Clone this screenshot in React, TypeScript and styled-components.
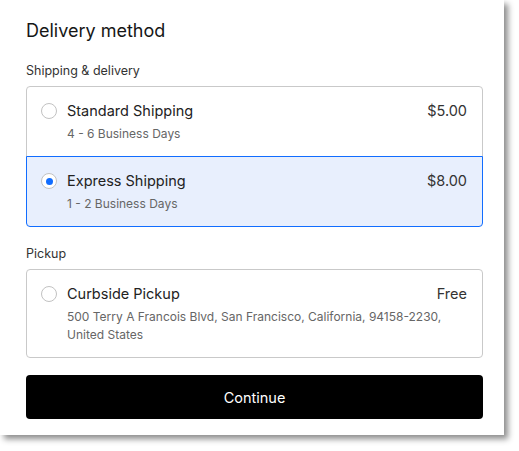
import React, { useState } from "react";
import styled, { createGlobalStyle, css } from "styled-components";

const GlobalStyle = createGlobalStyle`
  html, body {
    margin: 0;
    padding: 0;
    background: #ffffff;
  }
  body {
    font-family: Inter, "Noto Sans", Arial, sans-serif;
    color: #222;
  }
`;

const Page = styled.div`
  width: 519px;
  height: 451px;
  overflow: hidden;
`;

const Card = styled.div`
  width: 504px;
  height: 435px;
  box-sizing: border-box;
  background: #ffffff;
  padding: 19px 21px 16px 26px;
  box-shadow: 4px 4px 6px rgba(0, 0, 0, 0.45);
  display: flex;
  flex-direction: column;
`;

const Title = styled.h2`
  margin: 0;
  font-size: 18px;
  line-height: 24px;
  font-weight: 400;
  color: #161616;
`;

const SectionLabel = styled.div<{ $top: number }>`
  margin-top: ${(p) => p.$top}px;
  font-size: 12.5px;
  line-height: 18px;
  color: #333;
`;

const Group = styled.div`
  margin-top: 6px;
  display: flex;
  flex-direction: column;
`;

const Option = styled.label<{ $selected: boolean }>`
  position: relative;
  display: flex;
  align-items: flex-start;
  gap: 10px;
  padding: 13px 15px 13px 14px;
  border: 1px solid #c9c9c9;
  background: #ffffff;
  cursor: pointer;
  & + & {
    margin-top: -1px;
  }
  &:first-child {
    border-top-left-radius: 4px;
    border-top-right-radius: 4px;
  }
  &:last-child {
    border-bottom-left-radius: 4px;
    border-bottom-right-radius: 4px;
  }
  ${(p) =>
    p.$selected &&
    css`
      z-index: 1;
      border-color: #116dff;
      background: #e8effd;
    `}
`;

const Radio = styled.span<{ $checked: boolean }>`
  flex: none;
  width: 16px;
  height: 16px;
  margin-top: 3px;
  box-sizing: border-box;
  border: 1px solid #c2c2c2;
  border-radius: 50%;
  background: #ffffff;
  display: flex;
  align-items: center;
  justify-content: center;
  &::after {
    content: "";
    width: 7px;
    height: 7px;
    border-radius: 50%;
    background: ${(p) => (p.$checked ? "#116dff" : "transparent")};
  }
`;

const OptionBody = styled.div`
  flex: 1;
  display: flex;
  flex-direction: column;
  gap: 3px;
`;

const OptionHeader = styled.div`
  display: flex;
  justify-content: space-between;
  align-items: center;
`;

const OptionTitle = styled.span`
  font-size: 14.5px;
  line-height: 22px;
  color: #222;
`;

const Price = styled.span`
  font-size: 14.5px;
  line-height: 22px;
  color: #333;
`;

const OptionSub = styled.span`
  font-size: 12px;
  line-height: 18px;
  color: #666;
`;

const Button = styled.button`
  flex: none;
  margin-top: 17px;
  height: 44px;
  border: none;
  border-radius: 4px;
  background: #000;
  color: #fff;
  font-family: inherit;
  font-size: 14.5px;
  cursor: pointer;
`;

type Opt = { id: string; title: string; sub: string; price: string };

const shipping: Opt[] = [
  { id: "standard", title: "Standard Shipping", sub: "4 - 6 Business Days", price: "$5.00" },
  { id: "express", title: "Express Shipping", sub: "1 - 2 Business Days", price: "$8.00" },
];

const pickup: Opt[] = [
  {
    id: "curbside",
    title: "Curbside Pickup",
    sub: "500 Terry A Francois Blvd, San Francisco, California, 94158-2230, United States",
    price: "Free",
  },
];

export default function App() {
  const [selected, setSelected] = useState("express");

  const renderOpt = (o: Opt) => (
    <Option key={o.id} $selected={selected === o.id} onClick={() => setSelected(o.id)}>
      <Radio $checked={selected === o.id} />
      <OptionBody>
        <OptionHeader>
          <OptionTitle>{o.title}</OptionTitle>
          <Price>{o.price}</Price>
        </OptionHeader>
        <OptionSub>{o.sub}</OptionSub>
      </OptionBody>
    </Option>
  );

  return (
    <Page>
      <GlobalStyle />
      <Card>
        <Title>Delivery method</Title>
        <SectionLabel $top={19}>Shipping &amp; delivery</SectionLabel>
        <Group>{shipping.map(renderOpt)}</Group>
        <SectionLabel $top={18}>Pickup</SectionLabel>
        <Group>{pickup.map(renderOpt)}</Group>
        <Button>Continue</Button>
      </Card>
    </Page>
  );
}
